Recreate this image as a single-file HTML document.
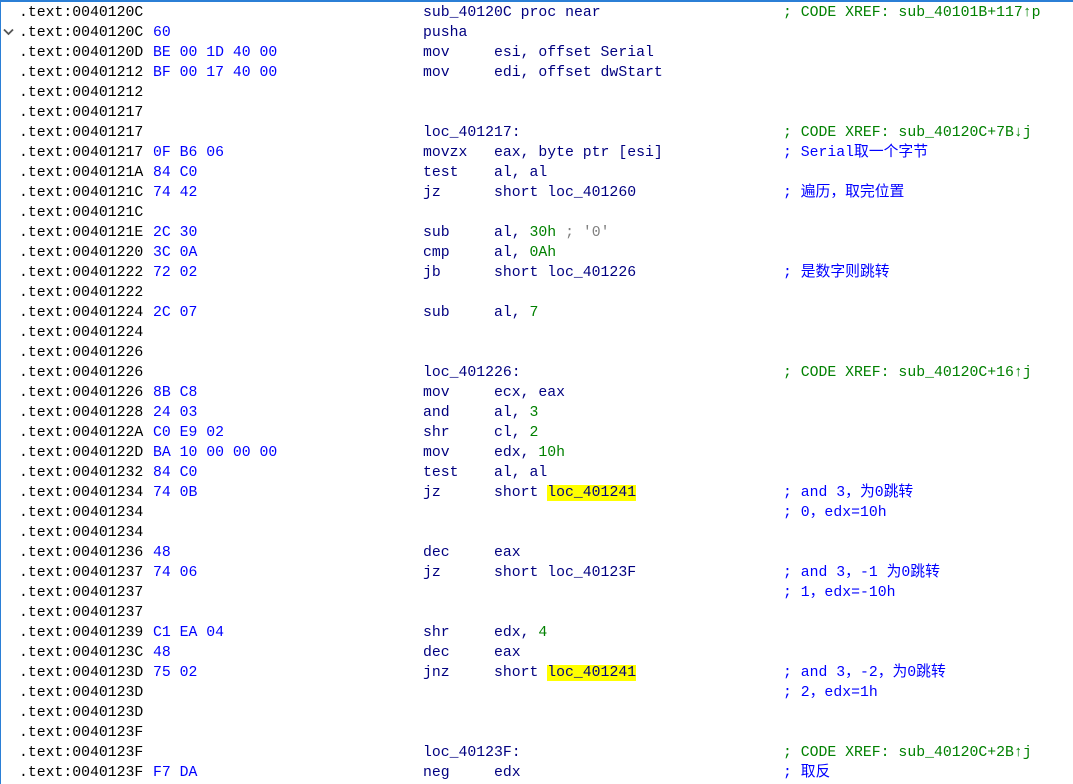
<!DOCTYPE html>
<html><head><meta charset="utf-8"><style>
html,body{margin:0;padding:0;background:#fff;width:1073px;height:784px;overflow:hidden;position:relative}
body{font-family:"Liberation Mono","Noto Sans CJK SC",monospace;font-size:14.8px}
.tb{position:absolute;left:0;top:0;width:1073px;height:2px;background:#2b7fd6}
.lb{position:absolute;left:0;top:0;width:1px;height:784px;background:#2b7fd6}
.r{position:absolute;left:0;height:20px;line-height:20px;width:1073px;white-space:pre}
.r span{position:absolute;top:0}
.a{left:19px;color:#000}
.b{left:153px;color:#0000ff}
.m{left:423px;color:#000080}
.o{left:494px;color:#000080}
.c{left:783px;color:#0000ff}
.x{left:783px;color:#008000}
.n{color:#008000;position:static!important}
.g{color:#808080;position:static!important}
.h{background:#ffff00;position:static!important}
</style></head><body>
<div class="tb"></div><div class="lb"></div>
<svg style="position:absolute;left:3px;top:28px" width="11" height="8"><path d="M1 1.5 L5.5 6 L10 1.5" stroke="#555" stroke-width="1.8" fill="none"/></svg>
<div class="r" style="top:3px"><span class="a">.text:0040120C</span><span class="m">sub_40120C proc near</span><span class="x">; CODE XREF: sub_40101B+117↑p</span></div>
<div class="r" style="top:23px"><span class="a">.text:0040120C</span><span class="b">60</span><span class="m">pusha</span></div>
<div class="r" style="top:43px"><span class="a">.text:0040120D</span><span class="b">BE 00 1D 40 00</span><span class="m">mov</span><span class="o">esi, offset Serial</span></div>
<div class="r" style="top:63px"><span class="a">.text:00401212</span><span class="b">BF 00 17 40 00</span><span class="m">mov</span><span class="o">edi, offset dwStart</span></div>
<div class="r" style="top:83px"><span class="a">.text:00401212</span></div>
<div class="r" style="top:103px"><span class="a">.text:00401217</span></div>
<div class="r" style="top:123px"><span class="a">.text:00401217</span><span class="m">loc_401217:</span><span class="x">; CODE XREF: sub_40120C+7B↓j</span></div>
<div class="r" style="top:143px"><span class="a">.text:00401217</span><span class="b">0F B6 06</span><span class="m">movzx</span><span class="o">eax, byte ptr [esi]</span><span class="c">; Serial取一个字节</span></div>
<div class="r" style="top:163px"><span class="a">.text:0040121A</span><span class="b">84 C0</span><span class="m">test</span><span class="o">al, al</span></div>
<div class="r" style="top:183px"><span class="a">.text:0040121C</span><span class="b">74 42</span><span class="m">jz</span><span class="o">short loc_401260</span><span class="c">; 遍历，取完位置</span></div>
<div class="r" style="top:203px"><span class="a">.text:0040121C</span></div>
<div class="r" style="top:223px"><span class="a">.text:0040121E</span><span class="b">2C 30</span><span class="m">sub</span><span class="o">al, <span class="n">30h</span> <span class="g">; '0'</span></span></div>
<div class="r" style="top:243px"><span class="a">.text:00401220</span><span class="b">3C 0A</span><span class="m">cmp</span><span class="o">al, <span class="n">0Ah</span></span></div>
<div class="r" style="top:263px"><span class="a">.text:00401222</span><span class="b">72 02</span><span class="m">jb</span><span class="o">short loc_401226</span><span class="c">; 是数字则跳转</span></div>
<div class="r" style="top:283px"><span class="a">.text:00401222</span></div>
<div class="r" style="top:303px"><span class="a">.text:00401224</span><span class="b">2C 07</span><span class="m">sub</span><span class="o">al, <span class="n">7</span></span></div>
<div class="r" style="top:323px"><span class="a">.text:00401224</span></div>
<div class="r" style="top:343px"><span class="a">.text:00401226</span></div>
<div class="r" style="top:363px"><span class="a">.text:00401226</span><span class="m">loc_401226:</span><span class="x">; CODE XREF: sub_40120C+16↑j</span></div>
<div class="r" style="top:383px"><span class="a">.text:00401226</span><span class="b">8B C8</span><span class="m">mov</span><span class="o">ecx, eax</span></div>
<div class="r" style="top:403px"><span class="a">.text:00401228</span><span class="b">24 03</span><span class="m">and</span><span class="o">al, <span class="n">3</span></span></div>
<div class="r" style="top:423px"><span class="a">.text:0040122A</span><span class="b">C0 E9 02</span><span class="m">shr</span><span class="o">cl, <span class="n">2</span></span></div>
<div class="r" style="top:443px"><span class="a">.text:0040122D</span><span class="b">BA 10 00 00 00</span><span class="m">mov</span><span class="o">edx, <span class="n">10h</span></span></div>
<div class="r" style="top:463px"><span class="a">.text:00401232</span><span class="b">84 C0</span><span class="m">test</span><span class="o">al, al</span></div>
<div class="r" style="top:483px"><span class="a">.text:00401234</span><span class="b">74 0B</span><span class="m">jz</span><span class="o">short <span class="h">loc_401241</span></span><span class="c">; and 3，为0跳转</span></div>
<div class="r" style="top:503px"><span class="a">.text:00401234</span><span class="c">; 0，edx=10h</span></div>
<div class="r" style="top:523px"><span class="a">.text:00401234</span></div>
<div class="r" style="top:543px"><span class="a">.text:00401236</span><span class="b">48</span><span class="m">dec</span><span class="o">eax</span></div>
<div class="r" style="top:563px"><span class="a">.text:00401237</span><span class="b">74 06</span><span class="m">jz</span><span class="o">short loc_40123F</span><span class="c">; and 3，-1 为0跳转</span></div>
<div class="r" style="top:583px"><span class="a">.text:00401237</span><span class="c">; 1，edx=-10h</span></div>
<div class="r" style="top:603px"><span class="a">.text:00401237</span></div>
<div class="r" style="top:623px"><span class="a">.text:00401239</span><span class="b">C1 EA 04</span><span class="m">shr</span><span class="o">edx, <span class="n">4</span></span></div>
<div class="r" style="top:643px"><span class="a">.text:0040123C</span><span class="b">48</span><span class="m">dec</span><span class="o">eax</span></div>
<div class="r" style="top:663px"><span class="a">.text:0040123D</span><span class="b">75 02</span><span class="m">jnz</span><span class="o">short <span class="h">loc_401241</span></span><span class="c">; and 3，-2，为0跳转</span></div>
<div class="r" style="top:683px"><span class="a">.text:0040123D</span><span class="c">; 2，edx=1h</span></div>
<div class="r" style="top:703px"><span class="a">.text:0040123D</span></div>
<div class="r" style="top:723px"><span class="a">.text:0040123F</span></div>
<div class="r" style="top:743px"><span class="a">.text:0040123F</span><span class="m">loc_40123F:</span><span class="x">; CODE XREF: sub_40120C+2B↑j</span></div>
<div class="r" style="top:763px"><span class="a">.text:0040123F</span><span class="b">F7 DA</span><span class="m">neg</span><span class="o">edx</span><span class="c">; 取反</span></div>
</body></html>
